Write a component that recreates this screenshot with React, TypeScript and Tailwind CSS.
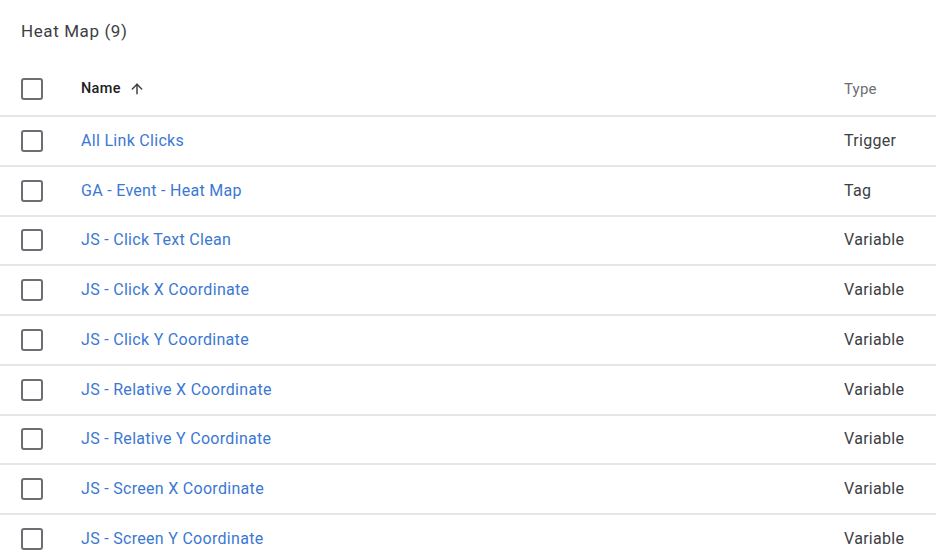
import { ArrowUp } from 'lucide-react'

const rows = [
  { name: 'All Link Clicks', type: 'Trigger' },
  { name: 'GA - Event - Heat Map', type: 'Tag' },
  { name: 'JS - Click Text Clean', type: 'Variable' },
  { name: 'JS - Click X Coordinate', type: 'Variable' },
  { name: 'JS - Click Y Coordinate', type: 'Variable' },
  { name: 'JS - Relative X Coordinate', type: 'Variable' },
  { name: 'JS - Relative Y Coordinate', type: 'Variable' },
  { name: 'JS - Screen X Coordinate', type: 'Variable' },
  { name: 'JS - Screen Y Coordinate', type: 'Variable' },
]

function Box() {
  return <div className="w-[22px] h-[22px] rounded-[3px] border-2 border-[#6b6e72] shrink-0" />
}

export default function App() {
  return (
    <div className="w-[936px] h-[559px] overflow-hidden bg-white font-['Roboto',sans-serif]">
      <div className="h-[63px] flex items-center px-[21px] text-[17px] tracking-[0.6px] text-[#3c4043]">Heat Map (9)</div>
      <div className="h-[54px] flex items-center pl-[21px] border-b-2 border-[#e6e6e6]">
        <Box />
        <div className="ml-[38px] flex items-center gap-[8px] text-[14.5px] font-medium tracking-[0.3px] text-[#202124]">
          Name
          <ArrowUp className="w-[16px] h-[16px] text-[#3c4043]" strokeWidth={2.2} />
        </div>
        <div className="ml-auto w-[92px] text-[15px] tracking-[0.2px] text-[#6b6e72]">Type</div>
      </div>
      {rows.map((r) => (
        <div key={r.name} className="h-[49.75px] flex items-center pl-[21px] border-b-2 border-[#e6e6e6]">
          <Box />
          <div className="ml-[38px] text-[16px] tracking-[0.3px] text-[#3b78d3]">{r.name}</div>
          <div className="ml-auto w-[92px] text-[16px] tracking-[0.3px] text-[#3c4043]">{r.type}</div>
        </div>
      ))}
    </div>
  )
}
